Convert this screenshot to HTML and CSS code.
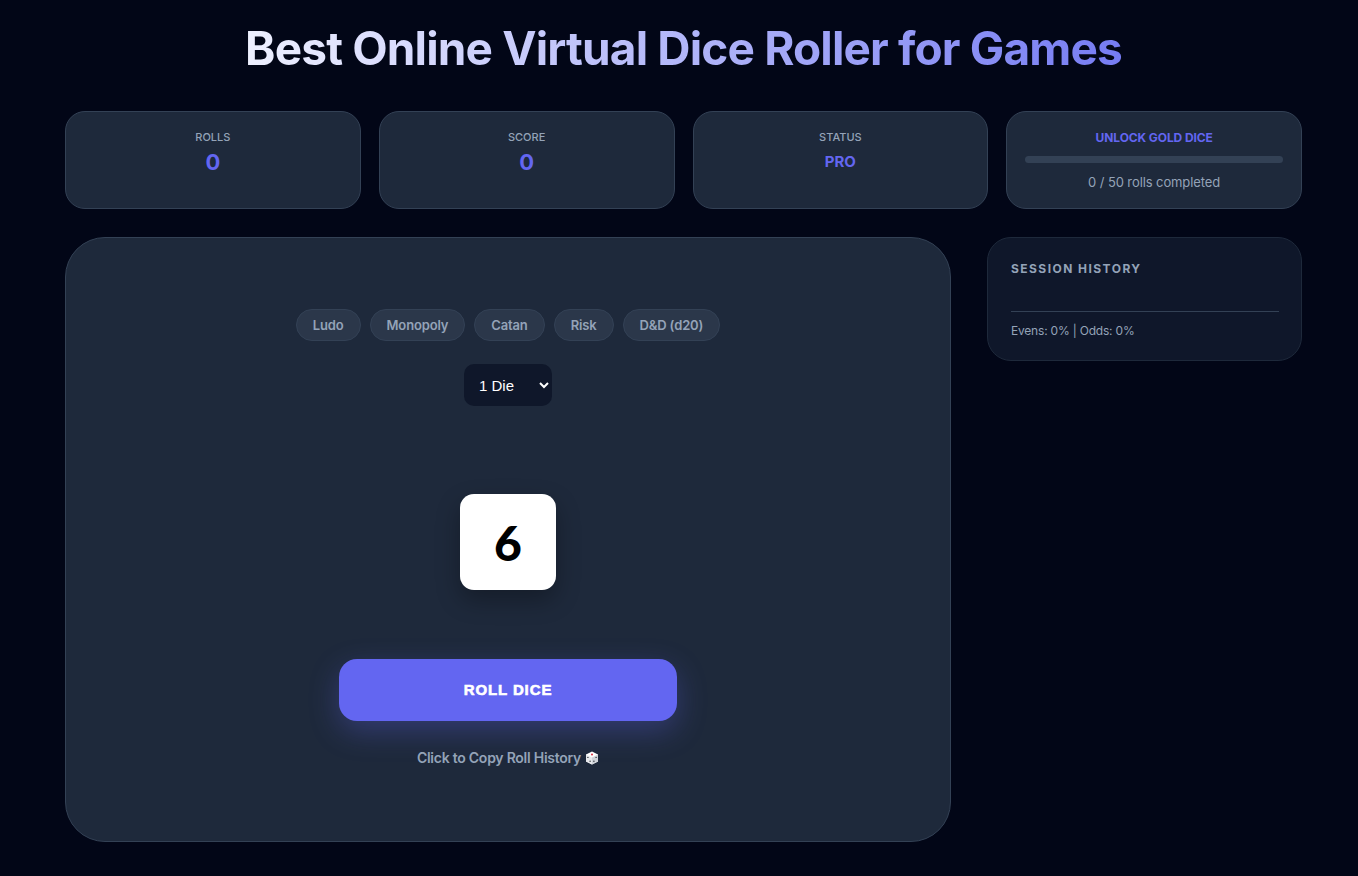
FILE: index.html
```html
<!DOCTYPE html>
<html lang="en">
<head>
    <meta charset="UTF-8">
    <meta name="viewport" content="width=device-width, initial-scale=1.0">
    <title>Best Online Virtual Dice Roller for Games</title>
    <link rel="stylesheet" href="styles.css">
</head>
<body>

    <div class="page">
        <h1 class="title">Best Online Virtual Dice Roller for Games</h1>

        <div class="stats">
            <div class="stat-card">
                <span class="stat-label">Rolls</span>
                <span class="stat-value">0</span>
            </div>
            <div class="stat-card">
                <span class="stat-label">Score</span>
                <span class="stat-value">0</span>
            </div>
            <div class="stat-card">
                <span class="stat-label">Status</span>
                <span class="stat-value stat-text">PRO</span>
            </div>
            <div class="stat-card unlock-card">
                <span class="unlock-title">UNLOCK GOLD DICE</span>
                <div class="progress"></div>
                <span class="unlock-note">0 / 50 rolls completed</span>
            </div>
        </div>

        <div class="layout">
            <main class="board">
                <div class="presets">
                    <button class="preset">Ludo</button>
                    <button class="preset">Monopoly</button>
                    <button class="preset">Catan</button>
                    <button class="preset">Risk</button>
                    <button class="preset">D&amp;D (d20)</button>
                </div>

                <select class="dice-count">
                    <option>1 Die</option>
                    <option>2 Dice</option>
                    <option>3 Dice</option>
                </select>

                <div class="die">6</div>

                <button class="roll-btn">ROLL DICE</button>

                <p class="copy-link">Click to Copy Roll History
                    <svg class="die-icon" viewBox="0 0 14 14" width="14" height="14" aria-hidden="true">
                        <path d="M7 0.5 L13 3.5 V10.5 L7 13.5 L1 10.5 V3.5 Z" fill="#ffffff"/>
                        <path d="M1 3.5 L7 6.5 V13.5 L1 10.5 Z" fill="#e6e8ec"/>
                        <path d="M13 3.5 L7 6.5 V13.5 L13 10.5 Z" fill="#cfd3d9"/>
                        <circle cx="7" cy="3.5" r="1" fill="#d8283c"/>
                        <circle cx="2.9" cy="6.4" r="0.7" fill="#30343a"/>
                        <circle cx="5.1" cy="10.2" r="0.7" fill="#30343a"/>
                        <circle cx="11.1" cy="6.4" r="0.7" fill="#30343a"/>
                        <circle cx="8.9" cy="10.2" r="0.7" fill="#30343a"/>
                    </svg>
                </p>
            </main>

            <aside class="history">
                <h2 class="history-title">SESSION HISTORY</h2>
                <div class="history-list"></div>
                <p class="history-stats">Evens: 0% | Odds: 0%</p>
            </aside>
        </div>
    </div>

</body>
</html>
```

FILE: styles.css
```css
body {
    font-family: 'Inter', 'Liberation Sans', sans-serif;
    background-color: #020617;
    color: white;
    margin: 0;
    padding: 0;
}

.page {
    width: 1237px;
    margin-left: 65px;
    padding-top: 20px;
}

.title {
    width: fit-content;
    margin: 0 auto 35px;
    font-size: 46px;
    line-height: 56px;
    font-weight: 700;
    letter-spacing: -0.85px;
    background: linear-gradient(90deg, #eef0ff 0%, #767cf3 100%);
    background-clip: text;
    -webkit-background-clip: text;
    color: transparent;
}

.stats {
    display: grid;
    grid-template-columns: repeat(4, 1fr);
    gap: 18px;
    margin-bottom: 28px;
}

.stat-card {
    height: 98px;
    box-sizing: border-box;
    background: #1e293b;
    border: 1px solid #334155;
    border-radius: 20px;
    padding: 17px 18px;
    text-align: center;
}

.stat-label {
    display: block;
    font-size: 11px;
    line-height: 16px;
    font-weight: 500;
    text-transform: uppercase;
    color: #94a3b8;
}

.stat-value {
    display: block;
    margin-top: 3px;
    font-size: 22px;
    line-height: 28px;
    font-weight: 700;
    color: #6366f1;
}

.stat-text {
    font-size: 15px;
}

.unlock-card {
    padding-top: 18px;
}

.unlock-title {
    display: block;
    font-size: 12px;
    line-height: 16px;
    font-weight: 700;
    letter-spacing: -0.1px;
    color: #6366f1;
}

.progress {
    height: 7px;
    margin-top: 10px;
    background: #334155;
    border-radius: 4px;
}

.unlock-note {
    display: block;
    margin-top: 11px;
    font-size: 13px;
    line-height: 16px;
    letter-spacing: -0.1px;
    color: #94a3b8;
}

.layout {
    display: grid;
    grid-template-columns: 886px 315px;
    gap: 36px;
    align-items: start;
}

.board {
    height: 605px;
    box-sizing: border-box;
    background: #1e293b;
    border: 1px solid #334155;
    border-radius: 40px;
    padding-top: 71px;
    display: flex;
    flex-direction: column;
    align-items: center;
}

.presets {
    display: flex;
    gap: 9px;
}

.preset {
    height: 32px;
    padding: 0 16px;
    font-family: inherit;
    font-size: 13px;
    font-weight: 600;
    letter-spacing: -0.15px;
    color: #94a3b8;
    background: rgba(51, 65, 85, 0.6);
    border: 1px solid #334155;
    border-radius: 17px;
}

.dice-count {
    margin-top: 23px;
    width: 88px;
    height: 42px;
    padding: 0 11px;
    font-family: 'Liberation Sans', Arial, sans-serif;
    font-size: 15px;
    color: white;
    background: #0f172a;
    border: none;
    border-radius: 10px;
}

.die {
    margin-top: 88px;
    width: 96px;
    height: 96px;
    display: flex;
    align-items: center;
    justify-content: center;
    background: white;
    border-radius: 14px;
    box-shadow: 0 10px 25px rgba(0, 0, 0, 0.3);
    font-family: 'Lato', 'Inter', sans-serif;
    font-size: 48px;
    font-weight: 900;
    color: black;
}

.roll-btn {
    margin-top: 69px;
    width: 338px;
    height: 62px;
    padding: 0 0 2px;
    font-family: 'Liberation Sans', Arial, sans-serif;
    font-size: 15px;
    font-weight: 700;
    letter-spacing: 0.9px;
    -webkit-text-stroke: 0.6px white;
    color: white;
    background: #6366f1;
    border: none;
    border-radius: 18px;
    box-shadow: 0 10px 30px rgba(99, 102, 241, 0.3);
}

.copy-link {
    margin: 28px 0 0;
    font-size: 14px;
    line-height: 18px;
    font-weight: 600;
    letter-spacing: -0.25px;
    color: #94a3b8;
    display: flex;
    align-items: center;
    gap: 4px;
}

.history {
    height: 124px;
    box-sizing: border-box;
    background: #0f172a;
    border: 1px solid #1e293b;
    border-radius: 24px;
    padding: 23px 22px 23px 23px;
}

.history-title {
    margin: 0;
    font-size: 12px;
    line-height: 16px;
    font-weight: 700;
    letter-spacing: 1.45px;
    color: #94a3b8;
}

.history-list {
    height: 34px;
    border-bottom: 1px solid #334155;
}

.history-stats {
    margin: 11px 0 0;
    font-size: 12px;
    line-height: 16px;
    letter-spacing: -0.2px;
    color: #94a3b8;
}
```
